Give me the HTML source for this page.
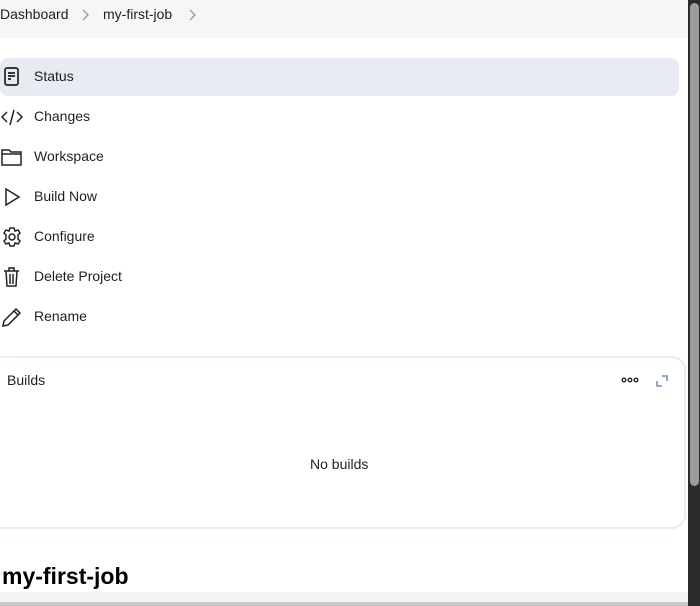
<!DOCTYPE html>
<html><head><style>
*{margin:0;padding:0;box-sizing:border-box}
body{width:700px;height:606px;overflow:hidden;background:#fff;font-family:"Liberation Sans",sans-serif;color:#1f1f1f;position:relative}
.bc{position:absolute;left:0;top:0;width:688px;height:38px;background:#f5f6f8;font-size:14px}
.bc span{position:absolute;top:6px}
.bc svg{position:absolute;top:9px}
.item{position:absolute;left:0;width:679px;height:38px;font-size:14px}
.item .t{position:absolute;left:34px;top:10px}
.item svg{position:absolute;left:1px;top:8px}
.sel{background:#e8ebf2;border-radius:8px}
.card{position:absolute;left:-12px;top:356px;width:698px;height:173px;border:2px solid #e9ecf2;border-radius:14px}
.sb{position:absolute;left:688px;top:0;width:12px;height:606px;background:#2b2b2b}
.th{position:absolute;left:690px;top:3px;width:9px;height:483px;background:#9d9d9d;border-radius:5px}
</style></head><body>
<div class="bc"><span style="left:0">Dashboard</span><svg style="left:81px" width="8" height="12" viewBox="0 0 8 12" fill="none" stroke="#999" stroke-width="1.3"><path d="M2 1l5 5-5 5"/></svg><span style="left:103px">my-first-job</span><svg style="left:188px" width="8" height="12" viewBox="0 0 8 12" fill="none" stroke="#999" stroke-width="1.3"><path d="M2 1l5 5-5 5"/></svg></div>
<div class="item sel" style="top:58px"><svg width="22" height="22" viewBox="0 0 22 22" fill="none" stroke="#222" stroke-width="1.7"><rect x="4" y="2" width="13" height="17" rx="2"/><path d="M7 7h7M7 10h7M7 13h3"/></svg><span class="t">Status</span></div>
<div class="item" style="top:98px"><svg width="22" height="22" viewBox="0 0 22 22" fill="none" stroke="#222" stroke-width="1.5"><path d="M6 6l-5 5 5 5M16 6l5 5-5 5M13 4l-4 15"/></svg><span class="t">Changes</span></div>
<div class="item" style="top:138px"><svg width="22" height="22" viewBox="0 0 22 22" fill="none" stroke="#222" stroke-width="1.5"><path d="M1 4h7l2 2h10v13H1z M1 8h19"/></svg><span class="t">Workspace</span></div>
<div class="item" style="top:178px"><svg width="22" height="22" viewBox="0 0 22 22" fill="none" stroke="#222" stroke-width="1.5"><path d="M5 3l13 8-13 8z"/></svg><span class="t">Build Now</span></div>
<div class="item" style="top:218px"><svg width="22" height="22" viewBox="0 0 22 22" fill="none" stroke="#222" stroke-width="1.5"><circle cx="11" cy="11" r="3"/><path d="M9 2h4l1 3 3-1 2 3-2 2v4l2 2-2 3-3-1-1 3H9l-1-3-3 1-2-3 2-2V9L3 7l2-3 3 1z"/></svg><span class="t">Configure</span></div>
<div class="item" style="top:258px"><svg width="22" height="22" viewBox="0 0 22 22" fill="none" stroke="#222" stroke-width="1.5"><path d="M3 5h15M8 5V2h5v3M5 5l1 15h9l1-15M9 8v10M12 8v10"/></svg><span class="t">Delete Project</span></div>
<div class="item" style="top:298px"><svg width="22" height="22" viewBox="0 0 22 22" fill="none" stroke="#222" stroke-width="1.5"><path d="M2 20l1-5L15 3l4 4L7 19z M13 5l4 4"/></svg><span class="t">Rename</span></div>
<div class="card"></div>
<div style="position:absolute;left:7px;top:372px;font-size:14px">Builds</div>
<svg style="position:absolute;left:621px;top:377px" width="18" height="6" viewBox="0 0 18 6" fill="none" stroke="#222" stroke-width="1.4"><circle cx="3" cy="3" r="1.8"/><circle cx="9" cy="3" r="1.8"/><circle cx="15" cy="3" r="1.8"/></svg>
<svg style="position:absolute;left:656px;top:375px" width="12" height="12" viewBox="0 0 12 12" fill="none" stroke="#6d8fc4" stroke-width="1.5"><path d="M6 1h5v5M1 6v5h5"/></svg>
<div style="position:absolute;left:310px;top:456px;font-size:14px">No builds</div>
<div style="position:absolute;left:2px;top:563px;font-size:23px;font-weight:bold;color:#000">my-first-job</div>
<div style="position:absolute;left:0;top:592px;width:688px;height:10px;background:#f4f4f4"></div>
<div style="position:absolute;left:0;top:602px;width:688px;height:4px;background:#c9c9c9"></div>
<div class="sb"></div><div class="th"></div>
</body></html>
